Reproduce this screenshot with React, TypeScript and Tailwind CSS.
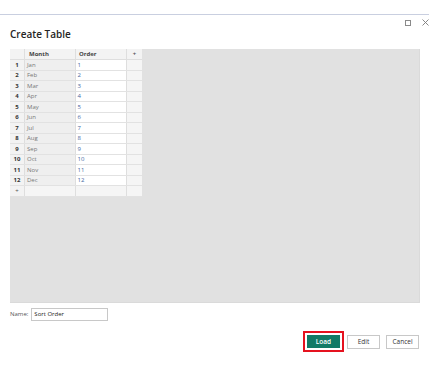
import React from 'react'

const months = ['Jan', 'Feb', 'Mar', 'Apr', 'May', 'Jun', 'Jul', 'Aug', 'Sep', 'Oct', 'Nov', 'Dec']

function WindowControls() {
  return (
    <div className="flex h-[9px] items-center justify-end gap-[11px] mt-[3px] pr-[1px]">
      <div className="w-[6px] h-[6px] border border-[#8a8a8a]" />
      <svg width="7" height="7" viewBox="0 0 7 7" className="mr-[-1px]">
        <path d="M0.5 0.5L6.5 6.5M6.5 0.5L0.5 6.5" stroke="#7a7a7a" strokeWidth="0.9" />
      </svg>
    </div>
  )
}

function DataGrid() {
  return (
    <div className="w-[132px] text-[6px] leading-none">
      {/* header */}
      <div className="flex h-[11px] border-b border-[#dedede] bg-[#f3f3f3]">
        <div className="w-[15px] border-r border-[#dedede]" />
        <div className="w-[51px] border-r border-[#dedede] flex items-center pl-[4px] font-bold text-[#444]">Month</div>
        <div className="w-[51px] border-r border-[#dedede] flex items-center pl-[3px] font-bold text-[#444]">Order</div>
        <div className="w-[15px] flex items-center justify-center font-bold text-[#555]">+</div>
      </div>
      {months.map((m, i) => (
        <div key={m} className="flex h-[10.5px] border-b border-[#e2e2e2]">
          <div className="w-[15px] border-r border-[#dedede] bg-[#f3f3f3] flex items-center justify-center font-bold text-[#333]">
            {i + 1}
          </div>
          <div className="w-[51px] border-r border-[#dedede] bg-[#efefef] flex items-center pl-[2px] text-[#777]">{m}</div>
          <div className="w-[51px] border-r border-[#dedede] bg-white flex items-center pl-[1.5px] text-[#44689f]">{i + 1}</div>
          <div className="w-[15px] bg-[#f5f5f5]" />
        </div>
      ))}
      <div className="flex h-[10.5px] border-b border-[#e2e2e2]">
        <div className="w-[15px] border-r border-[#dedede] bg-[#f3f3f3] flex items-center justify-center text-[#555]">+</div>
        <div className="w-[51px] border-r border-[#dedede] bg-[#f5f5f5]" />
        <div className="w-[51px] border-r border-[#dedede] bg-[#f5f5f5]" />
        <div className="w-[15px] bg-[#f5f5f5]" />
      </div>
    </div>
  )
}

export default function App() {
  return (
    <div className="w-[429px] h-[370px] bg-white overflow-hidden" style={{ fontFamily: '"Open Sans", sans-serif' }}>
      <div className="h-[14px]" />
      <div className="border-t border-[#c9cfe0]">
        <WindowControls />
        <h1 className="pl-[10px] text-[10px] leading-[14px] font-semibold text-[#252423]">Create Table</h1>
        <div className="mt-[8px] ml-[10px] mr-[9px] h-[254px] bg-[#e1e1e1] border border-[#dadada] border-t-0 border-l-0">
          <DataGrid />
        </div>
        <div className="mt-[5px] flex items-center pl-[10px] gap-[3px]">
          <span className="text-[6px] text-[#555]">Name:</span>
          <div className="w-[77px] h-[13px] border border-[#c8c8c8] flex items-center pl-[2px] text-[6px] text-[#222]">
            Sort Order
          </div>
        </div>
        <div className="mt-[10px] flex items-center justify-end pr-[10px]">
          <div className="border-2 border-[#e5121f] p-[2px]">
            <button className="w-[33px] h-[13px] bg-[#127a66] text-white text-[6.5px] font-semibold flex items-center justify-center">
              Load
            </button>
          </div>
          <button className="ml-[3px] w-[33px] h-[14px] border border-[#c8c8c8] bg-white text-[#333] text-[6.5px] flex items-center justify-center">
            Edit
          </button>
          <button className="ml-[6px] w-[33px] h-[14px] border border-[#c8c8c8] bg-white text-[#333] text-[6.5px] flex items-center justify-center">
            Cancel
          </button>
        </div>
      </div>
    </div>
  )
}
